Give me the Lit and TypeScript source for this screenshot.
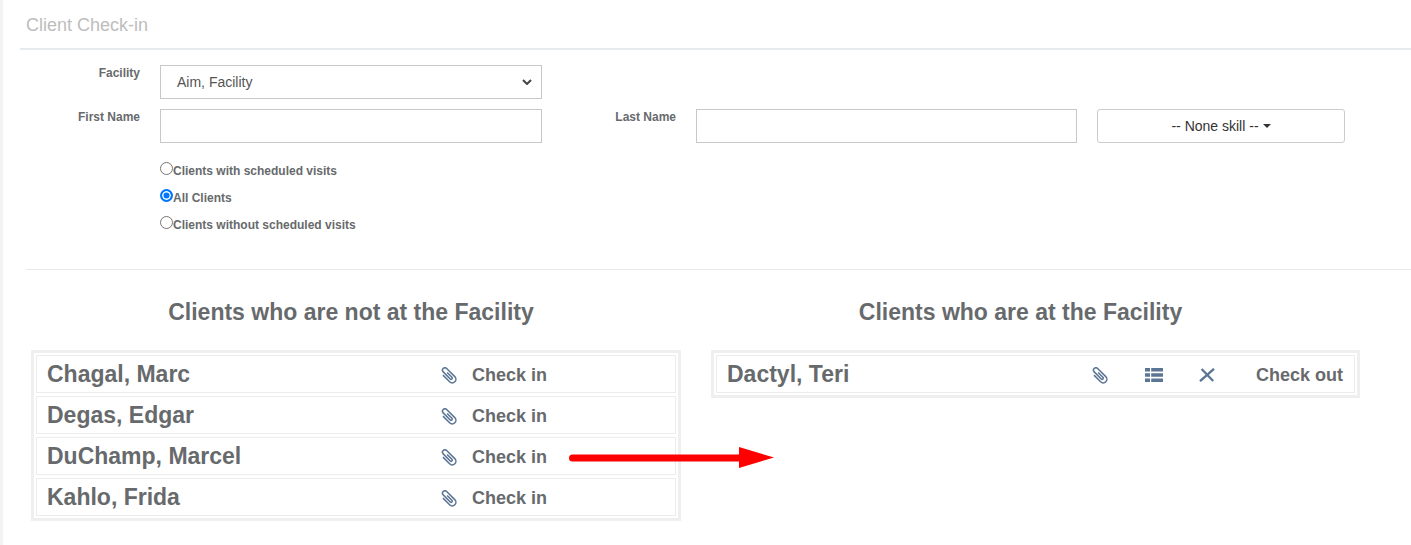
import { LitElement, html, css } from "lit";
import { customElement } from "lit/decorators.js";

const clip = html`<svg class="ic" viewBox="-8.5 -8.5 17 17" width="17" height="17"><g transform="rotate(-45) scale(1.05)"><path d="M-3.5 -4 V5 A3.5 3.5 0 0 0 3.5 5 V-6 A2.3 2.3 0 0 0 -1.1 -6 V3.5 A1.1 1.1 0 0 0 1.1 3.5 V-3" fill="none" stroke="#5b7594" stroke-width="1.45"/></g></svg>`;
const list = html`<svg class="ic" viewBox="0 0 18 14" width="18" height="14"><path fill="#5b7594" d="M0 0h5v3.6H0zM6.2 0H18v3.6H6.2zM0 5.2h5v3.6H0zM6.2 5.2H18v3.6H6.2zM0 10.4h5V14H0zM6.2 10.4H18V14H6.2z"/></svg>`;
const cross = html`<svg class="ic" viewBox="0 0 16 14" width="16" height="14"><path d="M1 13.2 L15 .8 M2.6 1 L14.2 13" fill="none" stroke="#5b7594" stroke-width="2.3"/></svg>`;

@customElement("app-root")
export class AppRoot extends LitElement {
  static styles = css`
    :host { display: block; height: 545px; overflow: hidden; position: relative; background: #fff; font-family: "Liberation Sans", Arial, sans-serif; color: #676a6c; border-left: 3px solid #f3f3f4; box-sizing: border-box; }
    .page { margin-left: 17px; }
    h1 { margin: 0; font-size: 18px; line-height: 20px; font-weight: 400; color: #bdbdbd; padding: 15px 0 13px 6px; border-bottom: 2px solid #e7eaec; }
    .form { display: grid; grid-template-columns: 120px 382px 154px 381px 40px 248px; grid-auto-rows: min-content; padding-top: 15px; }
    label.f { font-size: 12px; font-weight: 700; text-align: right; line-height: 15px; padding-top: 1px; color: #676a6c; }
    .sel, .inp { box-sizing: border-box; height: 34px; border: 1px solid #c8c8c8; background: #fff; margin-left: 20px; width: 100%; }
    .sel { display: flex; align-items: center; justify-content: space-between; padding: 0 9px 0 16px; font-size: 14px; color: #555; }
    .gap { height: 10px; grid-column: 1 / -1; }
    .spacer { grid-column: 3 / -1; }
    .dd { box-sizing: border-box; height: 34px; width: 248px; border: 1px solid #ccc; border-radius: 3px; display: flex; align-items: center; justify-content: center; gap: 4px; font-size: 14px; color: #333; }
    .caret { width: 0; height: 0; border-left: 4px solid transparent; border-right: 4px solid transparent; border-top: 4px solid #333; }
    .radios { margin: 14px 0 0 140px; display: flex; flex-direction: column; }
    .radio { display: flex; align-items: center; height: 27px; font-size: 12px; font-weight: 700; color: #676a6c; }
    .dot { box-sizing: border-box; width: 13px; height: 13px; border: 1px solid #767676; border-radius: 50%; background: #fff; margin-top: -4px; flex: none; }
    .dot.on { border: 2px solid #0075ff; background: #0075ff; box-shadow: inset 0 0 0 1.5px #fff; }
    hr { border: 0; border-top: 1px solid #e7eaec; margin: 31px 0 0 6px; }
    .cols { display: grid; grid-template-columns: 650px 649px; column-gap: 30px; margin: 27px 0 0 11px; }
    h2 { margin: 0 0 23px; text-align: center; font-size: 23px; line-height: 30px; font-weight: 700; color: #676a6c; }
    h2.l { padding-right: 10px; }
    h2.r { padding-right: 30px; }
    .box { border: 3px solid #efefef; padding: 2px; display: flex; flex-direction: column; gap: 3px; box-sizing: border-box; }
    .item { box-sizing: border-box; height: 38px; border: 1px solid #ececec; display: flex; align-items: center; padding: 2px 10px 0; }
    .name { font-size: 23px; font-weight: 700; flex: 1; margin-top: -2px; }
    .act { font-size: 18px; font-weight: 700; }
    .ic { display: block; flex: none; }
    .in .ic { margin-right: 15px; }
    .in .act { width: 193px; }
    .out { padding-right: 11px; }
    .out .i1 { margin-right: 37px; }
    .out .i2 { margin-right: 36px; }
    .out .i3 { margin-right: 41px; }
    .arrow { position: absolute; left: 566px; top: 447px; }
  `;
  render() {
    const left = ["Chagal, Marc", "Degas, Edgar", "DuChamp, Marcel", "Kahlo, Frida"];
    return html`<div class="page">
      <h1>Client Check-in</h1>
      <div class="form">
        <label class="f">Facility</label>
        <div class="sel"><span>Aim, Facility</span><svg width="10" height="6" viewBox="0 0 10 6"><path d="M1 1l4 4 4-4" fill="none" stroke="#444" stroke-width="2"/></svg></div>
        <div class="spacer"></div>
        <div class="gap"></div>
        <label class="f">First Name</label>
        <div class="inp"></div>
        <label class="f">Last Name</label>
        <div class="inp"></div>
        <div></div>
        <div class="dd">-- None skill --<span class="caret"></span></div>
      </div>
      <div class="radios">
        <div class="radio"><span class="dot"></span>Clients with scheduled visits</div>
        <div class="radio"><span class="dot on"></span>All Clients</div>
        <div class="radio"><span class="dot"></span>Clients without scheduled visits</div>
      </div>
      <hr />
      <div class="cols">
        <div>
          <h2 class="l">Clients who are not at the Facility</h2>
          <div class="box">
            ${left.map((n) => html`<div class="item in"><span class="name">${n}</span>${clip}<span class="act">Check in</span></div>`)}
          </div>
        </div>
        <div>
          <h2 class="r">Clients who are at the Facility</h2>
          <div class="box">
            <div class="item out"><span class="name">Dactyl, Teri</span><span class="i1">${clip}</span><span class="i2">${list}</span><span class="i3">${cross}</span><span class="act">Check out</span></div>
          </div>
        </div>
      </div>
    </div>
    <svg class="arrow" width="212" height="24" viewBox="0 0 212 24"><path d="M3.500 11H175" stroke="#fe0000" stroke-width="7" stroke-linecap="round"/><path d="M170 0 L205 10.500 L170 21z" fill="#fe0000"/></svg>`;
  }
}
